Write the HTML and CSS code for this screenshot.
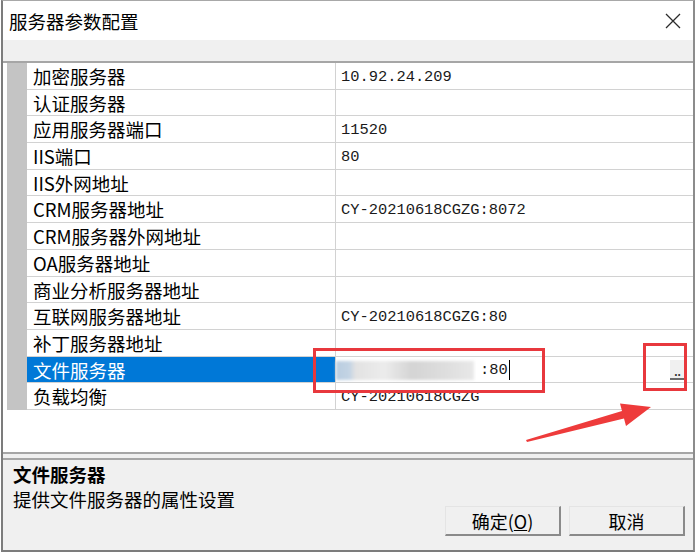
FILE: index.html
```html
<html><head>
<title>服务器参数配置</title>
<link rel="stylesheet" href="styles.css">
</head><body>

<div class="window">
  <div class="titlebar">
    <span class="title">服务器参数配置</span>
    <svg class="close" width="16" height="16" viewBox="0 0 16 16">
      <path d="M1 1 L15 15 M15 1 L1 15" stroke="#2b2b2b" stroke-width="1.3" fill="none"/>
    </svg>
  </div>
  <div class="band"></div>

  <div class="gridarea">
    <div class="grid">
      <div class="rowhead"></div>
      <div class="rows">
        <div class="row"><div class="label">加密服务器</div><div class="value">10.92.24.209</div></div>
        <div class="row"><div class="label">认证服务器</div><div class="value"></div></div>
        <div class="row"><div class="label">应用服务器端口</div><div class="value">11520</div></div>
        <div class="row"><div class="label">IIS端口</div><div class="value">80</div></div>
        <div class="row"><div class="label">IIS外网地址</div><div class="value"></div></div>
        <div class="row"><div class="label">CRM服务器地址</div><div class="value">CY-20210618CGZG:8072</div></div>
        <div class="row"><div class="label">CRM服务器外网地址</div><div class="value"></div></div>
        <div class="row"><div class="label">OA服务器地址</div><div class="value"></div></div>
        <div class="row"><div class="label">商业分析服务器地址</div><div class="value"></div></div>
        <div class="row"><div class="label">互联网服务器地址</div><div class="value">CY-20210618CGZG:80</div></div>
        <div class="row"><div class="label">补丁服务器地址</div><div class="value"></div></div>
        <div class="row selected">
          <div class="label">文件服务器</div>
          <div class="value edit">
            <span class="blurred"></span><span class="typed">:80</span><span class="caret"></span>
            <span class="dots">..</span>
          </div>
        </div>
        <div class="row"><div class="label">负载均衡</div><div class="value">CY-20210618CGZG</div></div>
      </div>
    </div>
  </div>

  <div class="splitter"></div>

  <div class="desc">
    <div class="desctext">
      <div class="desctitle">文件服务器</div>
      <div>提供文件服务器的属性设置</div>
    </div>
    <div class="buttons">
      <button class="btn">确定(<u>O</u>)</button>
      <button class="btn">取消</button>
    </div>
  </div>
</div>

<svg class="marks" width="700" height="556" viewBox="0 0 700 556">
  <rect x="314.5" y="349.5" width="229" height="42" fill="none" stroke="#e8383d" stroke-width="3"/>
  <rect x="644.5" y="344.5" width="41" height="45" fill="none" stroke="#e8383d" stroke-width="3"/>
  <polygon points="527,442 624,418.5 626,426 651,407 620,403.5 622,411 526,440" fill="#ee3b3b"/>
</svg>

</body></html>
```

FILE: styles.css
```css
body {
  margin:0;
  background-color:#ffffff;
  font-family:"Noto Sans CJK SC", "Noto Sans", sans-serif;
  color:#000000;
  position:relative;
  width:700px;
  height:556px;
  overflow:hidden;
}
.window {
  margin-left:1px;
  width:690px;
  height:549px;
  border-top:1px solid #a8a8a8;
  border-left:2px solid #7c7c7c;
  border-right:2px solid #8c8c8c;
  border-bottom:2px solid #7c7c7c;
  display:flex;
  flex-direction:column;
  background-color:#ffffff;
}
.titlebar {
  height:39px;
  display:flex;
  align-items:center;
  justify-content:space-between;
  padding-left:6px;
  padding-right:12px;
}
.title {
  font-size:18.5px;
  line-height:20px;
}
.close {
  display:block;
}
.band {
  height:21px;
  background-color:#f0f0f0;
  border-bottom:2px solid #a6a6a6;
}
.gridarea {
  height:388px;
  background-color:#ffffff;
  padding-left:4px;
}
.grid {
  display:flex;
}
.rowhead {
  width:20px;
  background-color:#c4c4c4;
}
.rows {
  flex:1;
}
.row {
  display:flex;
  height:26.7px;
}
.label {
  width:302px;
  padding-left:6px;
  padding-top:2px;
  font-size:18.5px;
  line-height:23.7px;
  white-space:nowrap;
  border-bottom:1px solid #d2d2d2;
  border-right:1px solid #d2d2d2;
}
.value {
  flex:1;
  padding-left:5px;
  padding-top:4px;
  font-family:"Liberation Mono", monospace;
  font-size:15.4px;
  line-height:21.7px;
  color:#1a1a1a;
  border-bottom:1px solid #d2d2d2;
  white-space:nowrap;
}
.selected .label {
  background-color:#0078d7;
  color:#ffffff;
}
.edit {
  display:flex;
  align-items:center;
  padding-left:0;
  padding-top:2px;
}
.blurred {
  width:138px;
  height:19px;
  background:linear-gradient(90deg, #b9cde0 0, #c4d4e4 10%, #e2e2e2 14%, #ececec 35%, #d4d4d4 55%, #dedede 80%, #e8e8e8 100%);
  filter:blur(1.5px);
  margin-right:6px;
}
.typed {
  color:#1a1a1a;
}
.caret {
  width:1px;
  height:20px;
  background-color:#000000;
  margin-left:1px;
}
.dots {
  margin-left:auto;
  margin-right:7px;
  width:16px;
  height:20px;
  align-self:flex-end;
  margin-bottom:2px;
  background-color:#f0f0f0;
  border-right:1px solid #a0a0a0;
  border-bottom:2px solid #6a6a6a;
  font-family:"Liberation Sans", sans-serif;
  font-size:12px;
  font-weight:bold;
  line-height:24px;
  text-align:center;
  color:#333333;
  box-sizing:border-box;
}
.splitter {
  height:4px;
  border-top:2px solid #a6a6a6;
  border-bottom:2px solid #a6a6a6;
  background-color:#f0f0f0;
  margin-top:1px;
}
.desc {
  flex:1;
  background-color:#f0f0f0;
  display:flex;
  justify-content:space-between;
  padding-left:10px;
  padding-right:8px;
}
.desctext {
  padding-top:2px;
  font-size:18.5px;
  line-height:25px;
}
.desctitle {
  font-weight:bold;
}
.buttons {
  align-self:flex-end;
  display:flex;
  gap:8px;
  margin-bottom:14px;
}
.btn {
  width:116px;
  height:30px;
  padding:0;
  background-color:#f0f0f0;
  border-style:solid;
  border-width:1px 2px 2px 1px;
  border-color:#e4e4e4 #8a8a8a #8a8a8a #e4e4e4;
  font-family:"Noto Sans CJK SC", sans-serif;
  font-size:18px;
  color:#000000;
}
.marks {
  position:absolute;
  left:0;
  top:0;
  pointer-events:none;
}
```
